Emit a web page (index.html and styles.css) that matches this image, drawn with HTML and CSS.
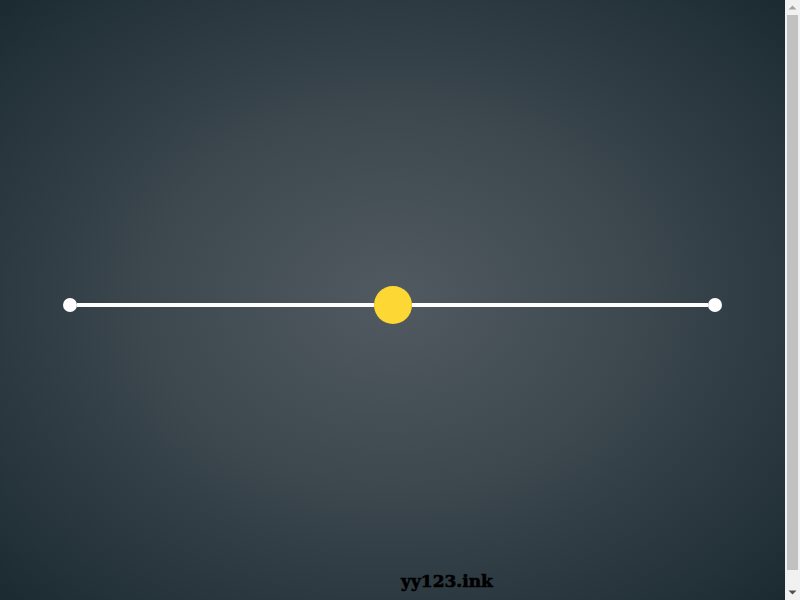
FILE: index.html
```html
<!DOCTYPE html>
<html lang="en">
<head>
<meta charset="utf-8">
<title>Slider</title>
<link rel="stylesheet" href="styles.css">
</head>
<body>
  <div class="page">
    <main class="stage">
      <div class="track">
        <span class="end-dot"></span>
        <span class="rail"></span>
        <span class="knob"></span>
        <span class="rail"></span>
        <span class="end-dot"></span>
      </div>
    </main>
    <footer class="brand">yy123.ink</footer>
  </div>
  <aside class="scrollbar" aria-hidden="true">
    <span class="sb-button">
      <svg width="15" height="15" viewBox="0 0 15 15"><polygon points="3.5,9.5 11.5,9.5 7.5,5.5" fill="#a3a3a3"/></svg>
    </span>
    <span class="sb-track"><span class="sb-thumb"></span></span>
    <span class="sb-button">
      <svg width="15" height="15" viewBox="0 0 15 15"><polygon points="3.5,5.5 11.5,5.5 7.5,9.5" fill="#505050"/></svg>
    </span>
  </aside>
</body>
</html>
```
FILE: styles.css
```css
html, body {
  margin: 0;
  height: 100%;
}

body {
  display: flex;
  overflow: hidden;
}

.page {
  flex: 1;
  position: relative;
  padding: 8px;
  display: flex;
  flex-direction: column;
  background: radial-gradient(ellipse at 50% 50%, #525a61 0%, #3c474e 45%, #1b2a31 100%);
}

.stage {
  flex: 1;
  display: flex;
  align-items: center;
  justify-content: center;
  padding-top: 10px;
}

.track {
  width: 659px;
  display: flex;
  align-items: center;
}

.rail {
  flex: 1;
  height: 4px;
  background: #ffffff;
}

.end-dot {
  width: 14px;
  height: 14px;
  border-radius: 50%;
  background: #ffffff;
}

.knob {
  width: 38px;
  height: 38px;
  border-radius: 50%;
  background: #fdd835;
}

/* site mark, laid over the bottom of the stage */
.brand {
  position: absolute;
  left: 0;
  right: 0;
  bottom: 9px;
  font-family: "DejaVu Serif", serif;
  font-weight: bold;
  font-size: 17px;
  line-height: 20px;
  -webkit-text-stroke: 0.6px #000000;
  color: #000000;
  text-align: center;
  padding-left: 109px;
}

/* page scrollbar, classic style */
.scrollbar {
  width: 15px;
  flex: none;
  display: flex;
  flex-direction: column;
  background: #f1f1f1;
}

.sb-button {
  height: 15px;
  flex: none;
  display: block;
}

.sb-button svg {
  display: block;
}

.sb-track {
  flex: 1;
  display: flex;
  flex-direction: column;
  padding: 0 2px 15px;
}

.sb-thumb {
  flex: 1;
  background: #c1c1c1;
}
```
